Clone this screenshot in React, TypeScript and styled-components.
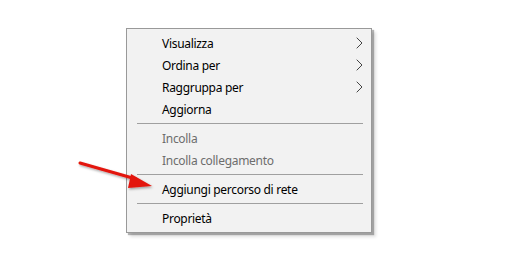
import styled, { createGlobalStyle } from "styled-components";

const GlobalStyle = createGlobalStyle`
  html, body {
    margin: 0;
    background: #ffffff;
  }
  body {
    font-family: "Noto Sans", "Open Sans", sans-serif;
  }
`;

const Page = styled.div`
  position: relative;
  width: 522px;
  height: 258px;
  padding: 28px 0 0 126px;
  box-sizing: border-box;
`;

const Menu = styled.ul`
  list-style: none;
  margin: 0;
  padding: 3px 0;
  width: 246px;
  box-sizing: border-box;
  background: #f2f2f2;
  border: 1px solid #999999;
  box-shadow: 2px 2px 1px rgba(0, 0, 0, 0.28), 4px 4px 3px rgba(0, 0, 0, 0.12);
`;

const Item = styled.li<{ $disabled?: boolean }>`
  display: flex;
  align-items: center;
  justify-content: space-between;
  height: 22px;
  padding: 0 8px 0 35px;
  font-size: 12px;
  letter-spacing: -0.3px;
  color: ${(p) => (p.$disabled ? "#6d6d6d" : "#000000")};
`;

const Separator = styled.li`
  height: 7px;
  display: flex;
  align-items: center;
  padding: 0 8px 0 10px;

  &::after {
    content: "";
    flex: 1;
    height: 1px;
    background: #a0a0a0;
  }
`;

const Arrow = styled.svg`
  position: absolute;
  left: 76px;
  top: 158px;
`;

function Chevron() {
  return (
    <svg width="7" height="12" viewBox="0 0 7 12">
      <path d="M0.7 0.7 L6 6 L0.7 11.3" fill="none" stroke="#444" strokeWidth="1" />
    </svg>
  );
}

const items: ({ label: string; sub?: boolean; disabled?: boolean } | "sep")[] = [
  { label: "Visualizza", sub: true },
  { label: "Ordina per", sub: true },
  { label: "Raggruppa per", sub: true },
  { label: "Aggiorna" },
  "sep",
  { label: "Incolla", disabled: true },
  { label: "Incolla collegamento", disabled: true },
  "sep",
  { label: "Aggiungi percorso di rete" },
  "sep",
  { label: "Proprietà" },
];

export default function App() {
  return (
    <Page>
      <GlobalStyle />
      <Menu>
        {items.map((it, i) =>
          it === "sep" ? (
            <Separator key={i} />
          ) : (
            <Item key={i} $disabled={it.disabled}>
              <span>{it.label}</span>
              {it.sub && <Chevron />}
            </Item>
          )
        )}
      </Menu>
      <Arrow width="82" height="36" viewBox="0 0 82 36">
        <defs>
          <filter id="sh" x="-10%" y="-30%" width="130%" height="170%">
            <feDropShadow dx="1" dy="1.5" stdDeviation="1" floodColor="#000" floodOpacity="0.35" />
          </filter>
        </defs>
        <g filter="url(#sh)">
          <path d="M4 5 L60 21" stroke="#e3160f" strokeWidth="3" strokeLinecap="round" />
          <path d="M76 28 L55 16 L52 30 Z" fill="#e3160f" />
        </g>
      </Arrow>
    </Page>
  );
}
